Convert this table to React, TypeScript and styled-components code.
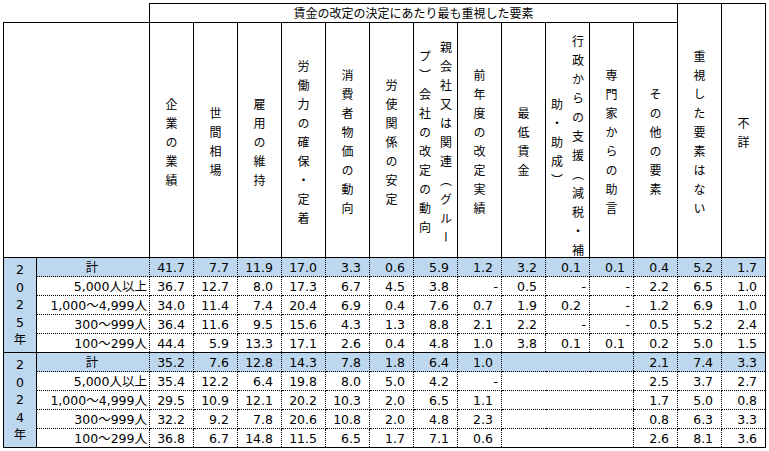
import React from 'react'
import styled, { createGlobalStyle } from 'styled-components'

const GlobalStyle = createGlobalStyle`
  body {
    margin: 0;
    background: #fff;
  }
`

const BLUE = '#bdd7ee'
const LINE = '1px solid #000'
const DOT = '1px dotted #000'

type Cell = string | null

type Row = {
  label: string
  values: Cell[]
}

type Block = {
  year: string
  rows: Row[]
}

const headers: string[][] = [
  ['企業の業績'],
  ['世間相場'],
  ['雇用の維持'],
  ['労働力の確保・定着'],
  ['消費者物価の動向'],
  ['労使関係の安定'],
  ['親会社又は関連（グルー', 'プ）会社の改定の動向'],
  ['前年度の改定実績'],
  ['最低賃金'],
  ['行政からの支援（減税・補', '助・助成）'],
  ['専門家からの助言'],
  ['その他の要素']
]

const blocks: Block[] = [
  {
    year: '2025',
    rows: [
      { label: '計', values: ['41.7', '7.7', '11.9', '17.0', '3.3', '0.6', '5.9', '1.2', '3.2', '0.1', '0.1', '0.4', '5.2', '1.7'] },
      { label: '5,000人以上', values: ['36.7', '12.7', '8.0', '17.3', '6.7', '4.5', '3.8', '-', '0.5', '-', '-', '2.2', '6.5', '1.0'] },
      { label: '1,000～4,999人', values: ['34.0', '11.4', '7.4', '20.4', '6.9', '0.4', '7.6', '0.7', '1.9', '0.2', '-', '1.2', '6.9', '1.0'] },
      { label: '300～999人', values: ['36.4', '11.6', '9.5', '15.6', '4.3', '1.3', '8.8', '2.1', '2.2', '-', '-', '0.5', '5.2', '2.4'] },
      { label: '100～299人', values: ['44.4', '5.9', '13.3', '17.1', '2.6', '0.4', '4.8', '1.0', '3.8', '0.1', '0.1', '0.2', '5.0', '1.5'] }
    ]
  },
  {
    year: '2024',
    rows: [
      { label: '計', values: ['35.2', '7.6', '12.8', '14.3', '7.8', '1.8', '6.4', '1.0', null, null, null, '2.1', '7.4', '3.3'] },
      { label: '5,000人以上', values: ['35.4', '12.2', '6.4', '19.8', '8.0', '5.0', '4.2', '-', null, null, null, '2.5', '3.7', '2.7'] },
      { label: '1,000～4,999人', values: ['29.5', '10.9', '12.1', '20.2', '10.3', '2.0', '6.5', '1.1', null, null, null, '1.7', '5.0', '0.8'] },
      { label: '300～999人', values: ['32.2', '9.2', '7.8', '20.6', '10.8', '2.0', '4.8', '2.3', null, null, null, '0.8', '6.3', '3.3'] },
      { label: '100～299人', values: ['36.8', '6.7', '14.8', '11.5', '6.5', '1.7', '7.1', '0.6', null, null, null, '2.6', '8.1', '3.6'] }
    ]
  }
]

const Page = styled.div`
  padding: 3px 0 0 3px;
`

const Table = styled.table`
  border-collapse: collapse;
  table-layout: fixed;
  width: 763px;
  font-family: 'DejaVu Sans', 'Noto Sans CJK JP', sans-serif;
  font-size: 12.5px;
  color: #000;
`

const Corner = styled.th`
  border: none;
  height: 18px;
  padding: 0;
`

const GroupHead = styled.th`
  border: ${LINE};
  height: 18px;
  padding: 0;
  font-family: 'Noto Sans CJK JP', sans-serif;
  font-size: 12px;
  font-weight: normal;
  text-align: center;
  line-height: 16px;
`

const HeadCell = styled.th<{ $tall?: boolean }>`
  border: ${LINE};
  height: ${p => (p.$tall ? 253 : 234)}px;
  padding: 0;
  font-family: 'Noto Sans CJK JP', sans-serif;
  font-size: 12px;
  font-weight: normal;
  vertical-align: middle;
`

const HeadInner = styled.div`
  display: flex;
  justify-content: center;
  align-items: center;
`

const VText = styled.div<{ $h: number }>`
  writing-mode: vertical-rl;
  height: ${p => p.$h}px;
  padding-top: 10px;
  letter-spacing: 7px;
  line-height: 21px;
  text-align: center;
  white-space: nowrap;
`

const YearCell = styled.td`
  border: ${LINE};
  background: ${BLUE};
  padding: 0;
  text-align: center;
  vertical-align: middle;
  line-height: 17.5px;
`

const LabelCell = styled.td<{ $blue?: boolean; $top?: boolean; $last?: boolean }>`
  border: ${DOT};
  border-left: ${LINE};
  border-top: ${p => (p.$top ? LINE : DOT)};
  border-bottom: ${p => (p.$last ? LINE : DOT)};
  background: ${p => (p.$blue ? BLUE : '#fff')};
  height: 18px;
  padding: 0 2px 0 0;
  text-align: ${p => (p.$blue ? 'center' : 'right')};
  white-space: nowrap;
  line-height: 15px;
`

const ValueCell = styled.td<{
  $blue?: boolean
  $top?: boolean
  $last?: boolean
  $end?: boolean
  $dash?: boolean
  $blank?: boolean
}>`
  border: ${DOT};
  border-top: ${p => (p.$top ? LINE : DOT)};
  border-bottom: ${p => (p.$last ? LINE : DOT)};
  border-right: ${p => (p.$end ? LINE : p.$blank ? 'none' : DOT)};
  ${p => p.$blank && 'border-left: none;'}
  background: ${p => (p.$blue ? BLUE : '#fff')};
  height: 18px;
  padding: 0 ${p => (p.$dash ? 3 : 8)}px 0 0;
  text-align: right;
  white-space: nowrap;
  line-height: 15px;
`

const VerticalHead = ({ lines, h }: { lines: string[]; h: number }): JSX.Element => (
  <HeadInner>
    <VText $h={h}>
      {lines.map((line, i) => (
        <React.Fragment key={i}>
          {i > 0 && <br />}
          {line}
        </React.Fragment>
      ))}
    </VText>
  </HeadInner>
)

export default function App(): JSX.Element {
  return (
    <Page>
      <GlobalStyle />
      <Table>
        <colgroup>
          <col style={{ width: 33 }} />
          <col style={{ width: 113 }} />
          {Array.from({ length: 14 }, (_, i) => (
            <col key={i} style={{ width: 44 }} />
          ))}
        </colgroup>
        <thead>
          <tr>
            <Corner colSpan={2} />
            <GroupHead colSpan={12}>賃金の改定の決定にあたり最も重視した要素</GroupHead>
            <HeadCell rowSpan={2} $tall>
              <VerticalHead lines={['重視した要素はない']} h={238} />
            </HeadCell>
            <HeadCell rowSpan={2} $tall>
              <VerticalHead lines={['不詳']} h={238} />
            </HeadCell>
          </tr>
          <tr>
            <HeadCell colSpan={2} />
            {headers.map((lines, i) => (
              <HeadCell key={i}>
                <VerticalHead lines={lines} h={220} />
              </HeadCell>
            ))}
          </tr>
        </thead>
        <tbody>
          {blocks.map((block, b) =>
            block.rows.map((row, r) => {
              const first = r === 0
              const last = b === blocks.length - 1 && r === block.rows.length - 1
              return (
                <tr key={`${b}-${r}`}>
                  {first && (
                    <YearCell rowSpan={block.rows.length}>
                      {block.year.split('').map((ch, i) => (
                        <React.Fragment key={i}>
                          {ch}
                          <br />
                        </React.Fragment>
                      ))}
                      年
                    </YearCell>
                  )}
                  <LabelCell $blue={first} $top={first} $last={last}>
                    {row.label}
                  </LabelCell>
                  {row.values.map((v, i) => (
                    <ValueCell
                      key={i}
                      $blue={first}
                      $top={first}
                      $last={last}
                      $end={i === row.values.length - 1}
                      $dash={v === '-'}
                      $blank={v === null}
                    >
                      {v}
                    </ValueCell>
                  ))}
                </tr>
              )
            })
          )}
        </tbody>
      </Table>
    </Page>
  )
}
